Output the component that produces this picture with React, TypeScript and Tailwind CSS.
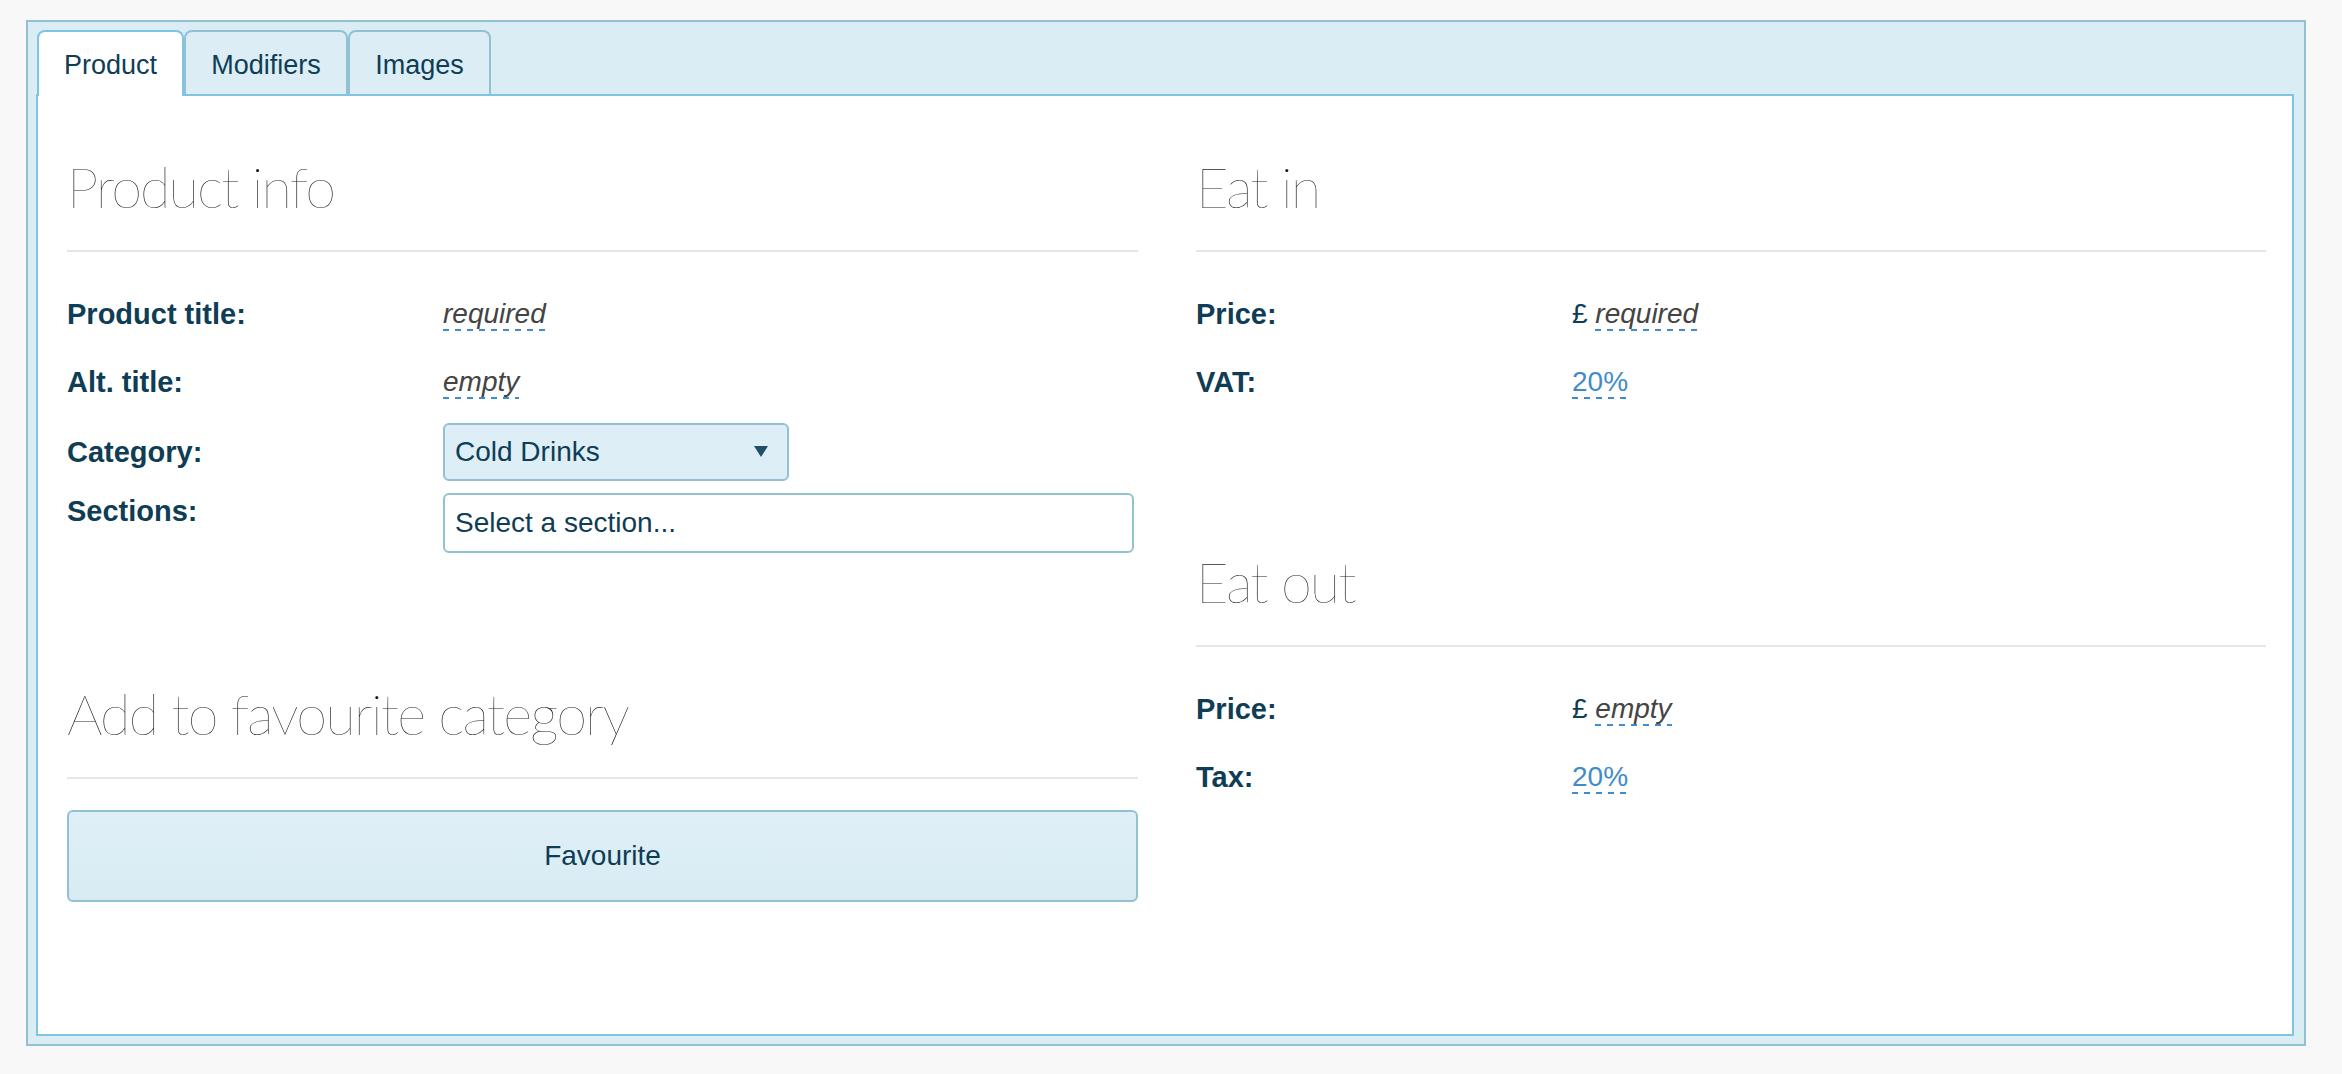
import React from 'react';

const ink = 'text-[#0e3d55]';

function Heading({ children }: { children: React.ReactNode }) {
  return (
    <div>
      <h2 className="h-[62px] font-['Lato',sans-serif] text-[56px] font-extralight leading-[62px] tracking-[-0.034em] text-[#1a1a1a]">
        {children}
      </h2>
      <div className="mt-[32px] h-[2px] bg-[#e6e6e6]" />
    </div>
  );
}

function Label({ children }: { children: React.ReactNode }) {
  return <div className={`w-[376px] shrink-0 text-[29px] font-bold leading-[36px] ${ink}`}>{children}</div>;
}

function Row({ label, children }: { label: string; children?: React.ReactNode }) {
  return (
    <div className="flex h-[68px] items-center">
      <Label>{label}</Label>
      <div className="leading-[36px]">{children}</div>
    </div>
  );
}

function Editable({ children, muted = true }: { children: React.ReactNode; muted?: boolean }) {
  return (
    <span
      className={`bg-[linear-gradient(to_right,#428bca_6px,transparent_6px)] bg-[length:12px_2px] bg-bottom-left bg-repeat-x pb-[2px] ${
        muted ? 'italic text-[#444]' : 'text-[#428bca]'
      }`}
    >
      {children}
    </span>
  );
}

function Tab({ label, active, width }: { label: string; active?: boolean; width: string }) {
  return (
    <div
      className={`${width} rounded-t-[8px] border-2 border-b-0 pt-[17px] text-center text-[27px] leading-[32px] ${ink} ${
        active
          ? 'relative z-10 -mb-[2px] h-[66px] border-[#7fc5e1] bg-white'
          : 'h-[64px] border-[#93c1d4] bg-[#dcedf5]'
      }`}
    >
      {label}
    </div>
  );
}

export default function App() {
  return (
    <div className="min-h-screen bg-[#f8f8f8] pt-[20px] pl-[26px] font-['Liberation_Sans',Arial,sans-serif] text-[28px]">
      <div className="w-[2280px] border-2 border-[#93c1d4] bg-[#daedf5] pt-[8px] pr-[10px] pb-[8px] pl-[8px]">
        <div className="flex h-[64px] items-start pl-[1px]">
          <Tab label="Product" active width="w-[147px]" />
          <Tab label="Modifiers" width="w-[164px]" />
          <Tab label="Images" width="w-[143px]" />
        </div>

        <div className="h-[942px] border-2 border-[#7fc5e1] bg-white px-[29px] pt-[60px]">
          <div className="grid grid-cols-[1071px_1070px] gap-x-[58px]">
            {/* left column */}
            <div>
              <Heading>Product info</Heading>
              <div className="pt-[28px]">
                <Row label="Product title:">
                  <Editable>required</Editable>
                </Row>
                <Row label="Alt. title:">
                  <Editable>empty</Editable>
                </Row>
                <div className="flex items-center pt-[7px]">
                  <Label>Category:</Label>
                  <div className="flex h-[58px] w-[346px] items-center justify-between rounded-[6px] border-2 border-[#93c1d4] bg-[#ddeef6] pr-[19px] pl-[10px]">
                    <span className={`leading-[36px] ${ink}`}>Cold Drinks</span>
                    <svg width="14" height="12" viewBox="0 0 14 12">
                      <polygon points="0,0 14,0 7,11" fill="#1f5068" />
                    </svg>
                  </div>
                </div>
                <div className="mt-[12px] flex items-start">
                  <Label>Sections:</Label>
                  <div className="flex h-[60px] w-[691px] items-center rounded-[6px] border-2 border-[#93c1d4] bg-white pl-[10px]">
                    <span className={`leading-[36px] ${ink}`}>Select a section...</span>
                  </div>
                </div>
              </div>

              <div className="mt-[130px]">
                <Heading>Add to favourite category</Heading>
                <button
                  className={`mt-[31px] flex h-[92px] w-full items-center justify-center rounded-[6px] border-2 border-[#93c1d4] bg-gradient-to-b from-[#dfeff7] to-[#d8ebf3] text-[28px] ${ink}`}
                >
                  Favourite
                </button>
              </div>
            </div>

            {/* right column */}
            <div>
              <Heading>Eat in</Heading>
              <div className="pt-[28px]">
                <Row label="Price:">
                  <span className={ink}>£ </span>
                  <Editable>required</Editable>
                </Row>
                <Row label="VAT:">
                  <Editable muted={false}>20%</Editable>
                </Row>
              </div>

              <div className="mt-[135px]">
                <Heading>Eat out</Heading>
                <div className="pt-[28px]">
                  <Row label="Price:">
                    <span className={ink}>£ </span>
                    <Editable>empty</Editable>
                  </Row>
                  <Row label="Tax:">
                    <Editable muted={false}>20%</Editable>
                  </Row>
                </div>
              </div>
            </div>
          </div>
        </div>
      </div>
    </div>
  );
}
